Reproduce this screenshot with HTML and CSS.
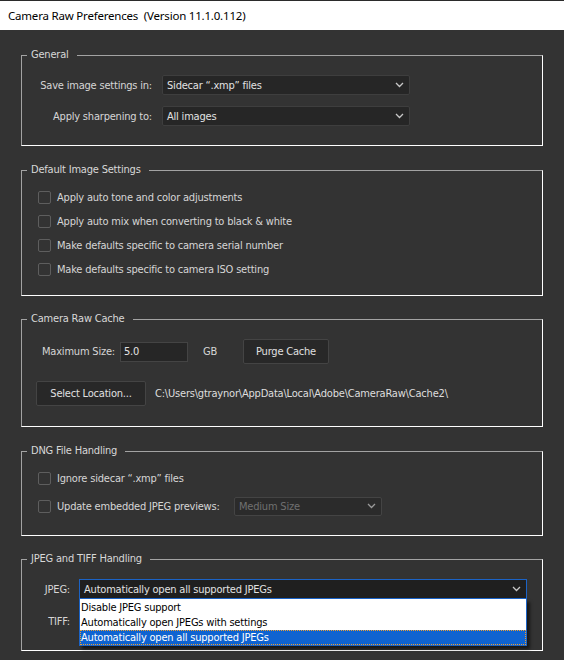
FILE: index.html
```html
<!DOCTYPE html>
<html>
<head>
<meta charset="utf-8">
<link rel="stylesheet" href="styles.css">
</head>
<body>
<div class="window">
  <div class="titlebar">Camera Raw Preferences&nbsp; (Version 11.1.0.112)</div>
  <div class="content">
    <fieldset class="group g-general">
      <legend>General</legend>
      <div class="form-grid">
        <span class="label">Save image settings in:</span>
        <div class="select"><span>Sidecar “.xmp” files</span><svg class="chev" width="9" height="6" viewBox="0 0 9 6"><polyline points="1,1 4.5,4.5 8,1" fill="none" stroke="#c8c8c8" stroke-width="1.3"/></svg></div>
        <span class="label">Apply sharpening to:</span>
        <div class="select"><span>All images</span><svg class="chev" width="9" height="6" viewBox="0 0 9 6"><polyline points="1,1 4.5,4.5 8,1" fill="none" stroke="#c8c8c8" stroke-width="1.3"/></svg></div>
      </div>
    </fieldset>

    <fieldset class="group g-default">
      <legend>Default Image Settings</legend>
      <div class="check-list">
        <label class="check-row"><span class="box"></span>Apply auto tone and color adjustments</label>
        <label class="check-row"><span class="box"></span>Apply auto mix when converting to black &amp; white</label>
        <label class="check-row"><span class="box"></span>Make defaults specific to camera serial number</label>
        <label class="check-row"><span class="box"></span>Make defaults specific to camera ISO setting</label>
      </div>
    </fieldset>

    <fieldset class="group g-cache">
      <legend>Camera Raw Cache</legend>
      <div class="cache-row1">
        <span class="label max-label">Maximum Size:</span>
        <div class="input">5.0</div>
        <span class="unit">GB</span>
        <div class="button btn-purge">Purge Cache</div>
      </div>
      <div class="cache-row2">
        <div class="button btn-loc">Select Location...</div>
        <span class="path">C:\Users\gtraynor\AppData\Local\Adobe\CameraRaw\Cache2\</span>
      </div>
    </fieldset>

    <fieldset class="group g-dng">
      <legend>DNG File Handling</legend>
      <div class="check-list dng-list">
        <label class="check-row"><span class="box"></span>Ignore sidecar “.xmp” files</label>
        <div class="check-row"><span class="box"></span><span class="dng-label">Update embedded JPEG previews:</span>
          <div class="select select-disabled select-medium"><span>Medium Size</span><svg class="chev" width="9" height="6" viewBox="0 0 9 6"><polyline points="1,1 4.5,4.5 8,1" fill="none" stroke="#9a9a9a" stroke-width="1.3"/></svg></div>
        </div>
      </div>
    </fieldset>

    <fieldset class="group g-jpeg">
      <legend>JPEG and TIFF Handling</legend>
      <div class="form-grid jpeg-grid">
        <span class="label">JPEG:</span>
        <div class="select-wrap">
          <div class="select select-open"><span>Automatically open all supported JPEGs</span><svg class="chev" width="9" height="6" viewBox="0 0 9 6"><polyline points="1,1 4.5,4.5 8,1" fill="none" stroke="#c8c8c8" stroke-width="1.3"/></svg></div>
          <ul class="dropdown">
            <li>Disable JPEG support</li>
            <li>Automatically open JPEGs with settings</li>
            <li class="selected">Automatically open all supported JPEGs</li>
          </ul>
        </div>
        <span class="label">TIFF:</span>
        <div class="select"><span></span><svg class="chev" width="9" height="6" viewBox="0 0 9 6"><polyline points="1,1 4.5,4.5 8,1" fill="none" stroke="#c8c8c8" stroke-width="1.3"/></svg></div>
      </div>
    </fieldset>
  </div>
</div>
</body>
</html>
```

FILE: styles.css
```css
html, body {
  margin: 0;
  padding: 0;
}
body {
  width: 564px;
  height: 660px;
  overflow: hidden;
  background: #333333;
  font-family: "DejaVu Sans Condensed", "DejaVu Sans", sans-serif;
  font-stretch: condensed;
  font-size: 11px;
  letter-spacing: -0.2px;
  color: #d6d6d6;
}
.window {
  width: 564px;
  height: 660px;
  display: flex;
  flex-direction: column;
}
.titlebar {
  height: 29px;
  border-top: 1px solid #2b2b2b;
  background: #ffffff;
  color: #000000;
  font-family: "Noto Sans", "Open Sans", sans-serif;
  font-stretch: normal;
  font-size: 11.5px;
  letter-spacing: -0.2px;
  line-height: 29px;
  padding-left: 8px;
  white-space: pre;
}
.content {
  flex: 1;
  padding: 17px 21px 0 21px;
  display: flex;
  flex-direction: column;
  gap: 16px;
}
.group {
  margin: 0;
  padding: 0;
  min-width: 0;
  border: 1px solid;
  border-color: #a3a3a3 #ffffff #ffffff #a3a3a3;
}
.g-cache,
.g-jpeg {
  margin-top: -1px;
}
.group legend {
  margin-left: 5px;
  padding: 0 8px 0 4px;
  line-height: 16px;
  color: #d8d8d8;
}
.label {
  color: #d6d6d6;
  white-space: nowrap;
}
.form-grid {
  display: grid;
  grid-template-columns: 130px 248px;
  column-gap: 10px;
  row-gap: 11px;
  align-items: center;
  padding: 12px 0 19px 0;
}
.form-grid .label {
  text-align: right;
}
.select {
  height: 20px;
  box-sizing: border-box;
  background: #262626;
  border: 1px solid #3e3e3e;
  border-radius: 2px;
  display: flex;
  align-items: center;
  justify-content: space-between;
  padding: 0 5px 0 4px;
  color: #e2e2e2;
  white-space: nowrap;
}
.chev {
  display: block;
  flex: none;
}
.check-list {
  display: flex;
  flex-direction: column;
  padding: 7px 0 14px 16px;
}
.check-row {
  height: 24px;
  display: flex;
  align-items: center;
  color: #d6d6d6;
  white-space: nowrap;
}
.box {
  width: 13px;
  height: 13px;
  box-sizing: border-box;
  border: 1px solid #5e5e5e;
  border-radius: 2px;
  margin-right: 6px;
  flex: none;
}
.cache-row1 {
  display: flex;
  align-items: center;
  height: 25px;
  padding: 12px 0 0 20px;
}
.max-label {
  width: 78px;
}
.input {
  width: 68px;
  height: 20px;
  box-sizing: border-box;
  background: #262626;
  border: 1px solid #444444;
  color: #e2e2e2;
  padding-left: 3px;
  line-height: 18px;
}
.unit {
  width: 40px;
  margin-left: 15px;
}
.button {
  height: 25px;
  box-sizing: border-box;
  background: #282828;
  border: 1px solid #444444;
  border-radius: 2px;
  display: flex;
  align-items: center;
  justify-content: center;
  color: #e0e0e0;
  white-space: nowrap;
}
.btn-purge {
  width: 86px;
}
.cache-row2 {
  display: flex;
  align-items: center;
  padding: 17px 0 20px 14px;
}
.btn-loc {
  width: 110px;
}
.path {
  margin-left: 9px;
  color: #dedede;
  white-space: nowrap;
}
.dng-list {
  gap: 4px;
  padding-bottom: 17px;
}
.dng-label {
  width: 177px;
}
.select-medium {
  width: 148px;
  height: 19px;
}
.select-disabled {
  background: #2b2b2b;
  border-color: #444444;
  color: #707070;
}
.jpeg-grid {
  grid-template-columns: 48px 448px;
  column-gap: 9px;
  row-gap: 12px;
}
.select-wrap {
  position: relative;
  z-index: 10;
}
.select-open {
  background: #1f1f1f;
  border-color: #1b63c6;
  border-radius: 0;
  padding-left: 4px;
}
.dropdown {
  position: absolute;
  left: 0;
  top: 100%;
  width: 448px;
  box-sizing: border-box;
  margin: 0;
  padding: 1px 0 0 0;
  list-style: none;
  background: #ffffff;
  border: 1px solid #1b63c6;
  border-top: none;
  box-shadow: 3px 3px 3px rgba(0, 0, 0, 0.55);
  color: #000000;
}
.dropdown li {
  height: 15px;
  line-height: 15px;
  padding-left: 1px;
  white-space: nowrap;
}
.dropdown li.selected {
  background: #0f63d0;
  color: #ffffff;
  outline: 1px dotted #f0a030;
  outline-offset: -1px;
}
```
